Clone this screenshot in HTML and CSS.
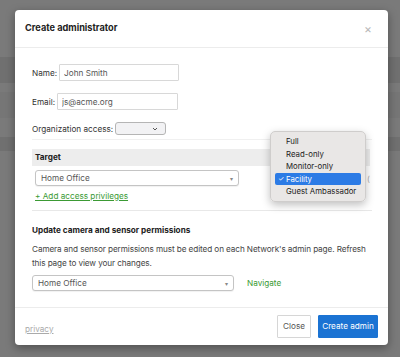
FILE: index.html
```html
<!DOCTYPE html>
<html lang="en">
<head>
  <meta charset="UTF-8" />
  <meta name="viewport" content="width=device-width, initial-scale=1.0" />
  <title>Create administrator</title>
  <link rel="stylesheet" href="styles.css">
</head>
<body>
  <div class="modal">
    <div class="modal-header">
      <h2>Create administrator</h2>
      <span class="close">&times;</span>
    </div>

    <div class="modal-body">
      <div class="field">
        <label>Name:</label>
        <input type="text" class="text-input name-input" value="John Smith" />
      </div>
      <div class="field">
        <label>Email:</label>
        <input type="text" class="text-input email-input" value="js@acme.org" />
      </div>
      <div class="field">
        <label>Organization access:</label>
        <span class="mini-select"><svg width="6" height="4" viewBox="0 0 6 4"><path d="M1 1 L3 3 L5 1" fill="none" stroke="#555" stroke-width="1"/></svg></span>
      </div>

      <div class="target-block">
        <div class="target-head">Target</div>
        <div class="select wide"><span>Home Office</span><span class="caret">&#9662;</span></div>
        <a class="green-link add-link" href="#">+ Add access privileges</a>
        <span class="remove-mark">(</span>
      </div>

      <div class="camera-block">
        <h3>Update camera and sensor permissions</h3>
        <p>Camera and sensor permissions must be edited on each Network's admin page. Refresh this page to view your changes.</p>
        <div class="nav-row">
          <div class="select wide"><span>Home Office</span><span class="caret">&#9662;</span></div>
          <a class="green-link" href="#">Navigate</a>
        </div>
      </div>
    </div>

    <div class="modal-footer">
      <a class="privacy" href="#">privacy</a>
      <div class="buttons">
        <button class="btn btn-close">Close</button>
        <button class="btn btn-primary">Create admin</button>
      </div>
    </div>

    <ul class="menu">
      <li>Full</li>
      <li>Read-only</li>
      <li>Monitor-only</li>
      <li class="selected"><span class="check">&#10003;</span>Facility</li>
      <li>Guest Ambassador</li>
    </ul>
  </div>
</body>
</html>
```

FILE: styles.css
```css
/* Page behind the overlay */
* { box-sizing: border-box; }
body {
  margin: 0;
  height: 357px;
  overflow: hidden;
  padding: 10px 12px 0 15px;
  font-family: Inter, "Liberation Sans", sans-serif;
  font-size: 8.2px;
  color: #333;
  background:
    linear-gradient(to bottom,
      #7a7a7a 0, #7a7a7a 57px,
      #707070 57px, #707070 83px,
      #7a7a7a 83px, #7a7a7a 92px,
      #767676 92px, #767676 118px,
      #7a7a7a 118px, #7a7a7a 137px,
      #707070 137px, #707070 151px,
      #7a7a7a 151px);
}

.modal {
  position: relative;
  width: 373px;
  height: 335px;
  background: #fff;
  border-radius: 4px;
  box-shadow: 0 3px 10px rgba(0,0,0,0.35);
  display: flex;
  flex-direction: column;
}

/* Header */
.modal-header {
  height: 38px;
  border-bottom: 1px solid #ececec;
  display: flex;
  justify-content: space-between;
  align-items: flex-start;
  padding: 12px 16px 0 10px;
}
.modal-header h2 {
  margin: 0;
  font-size: 9.2px;
  font-weight: 700;
  color: #222;
}
.close {
  color: #b8b8b8;
  font-size: 12px;
  line-height: 12px;
  margin-top: 1px;
}

/* Body */
.modal-body {
  flex: 1;
  padding: 16px 16px 0 17px;
}
.field {
  display: flex;
  align-items: center;
  gap: 2px;
  margin-bottom: 12px;
  color: #333;
}
.text-input {
  height: 17px;
  border: 1px solid #d8d8d8;
  border-radius: 1px;
  padding: 0 4px;
  font-family: inherit;
  font-size: 8.2px;
  color: #555;
}
.name-input { width: 120px; }
.email-input { width: 121px; }
.mini-select {
  width: 51px;
  height: 13px;
  border: 1px solid #b5b5b5;
  border-radius: 3px;
  background: #f2f2f4;
  display: flex;
  align-items: center;
  justify-content: flex-end;
  padding-right: 7px;
}

.target-block {
  position: relative;
  border-top: 1px solid #f0f0f0;
  padding-top: 9px;
  margin-top: -8px;
}
.target-head {
  height: 17px;
  margin-right: 2px;
  background: #ededed;
  font-weight: 700;
  color: #222;
  padding: 0 3px;
  line-height: 17px;
}
.select {
  height: 16px;
  border: 1px solid #c4c4c4;
  border-radius: 3px;
  display: flex;
  justify-content: space-between;
  align-items: center;
  padding: 0 5px;
  color: #555;
  background: #fff;
  box-shadow: 0 1px 1px rgba(0,0,0,0.06);
}
.target-block .select { width: 204px; margin: 4px 0 0 3px; }
.caret { font-size: 6px; color: #888; }

.green-link { color: #3b9a34; text-decoration: none; }
.add-link {
  display: inline-block;
  margin: 5px 0 0 3px;
  text-decoration: underline;
}
.remove-mark {
  position: absolute;
  right: 2px;
  top: 34px;
  color: #aaa;
  font-size: 8px;
}

.camera-block {
  margin-top: 9px;
  border-top: 1px solid #e8e8e8;
  padding-top: 14px;
}
.camera-block h3 {
  margin: 0 0 8px;
  font-size: 8.2px;
  font-weight: 700;
  color: #222;
}
.camera-block p {
  margin: 0 0 5px;
  line-height: 13.5px;
  letter-spacing: -0.1px;
  color: #444;
}
.nav-row {
  display: flex;
  align-items: center;
  gap: 13px;
}
.nav-row .select { width: 202px; }

/* Footer */
.modal-footer {
  height: 38px;
  border-top: 1px solid #ececec;
  display: flex;
  justify-content: space-between;
  align-items: center;
  padding: 0 10px;
}
.privacy {
  color: #aaa;
  text-decoration: underline;
  margin-top: 4px;
}
.buttons { display: flex; gap: 7px; margin-top: -1px; }
.btn {
  height: 23px;
  font-family: inherit;
  font-size: 8.2px;
  border-radius: 1px;
  padding: 0 5px;
  white-space: nowrap;
}
.btn-close {
  background: #fff;
  border: 1px solid #d6d6d6;
  color: #555;
}
.btn-primary {
  background: #1b73d3;
  border: 1px solid #1b73d3;
  color: #fff;
  width: 60px;
  padding: 0;
}

/* Native-looking dropdown menu */
.menu {
  position: absolute;
  left: 255px;
  top: 121px;
  width: 96px;
  margin: 0;
  padding: 3px 4px;
  list-style: none;
  background: rgba(232,230,229,0.97);
  border: 1px solid #cfcdcc;
  border-radius: 5px;
  box-shadow: 0 3px 8px rgba(0,0,0,0.25);
  font-size: 7.8px;
  color: #222;
}
.menu li {
  height: 12.6px;
  line-height: 12.6px;
  padding-left: 11px;
  border-radius: 2px;
}
.menu li.selected {
  background: #2c7be5;
  color: #fff;
  position: relative;
}
.check {
  position: absolute;
  left: 3px;
  font-size: 7px;
}
```
